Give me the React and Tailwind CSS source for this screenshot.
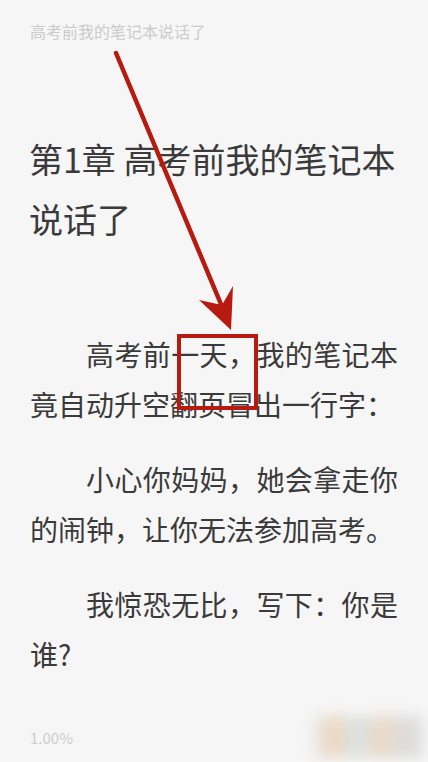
import React from 'react';

const font = { fontFamily: '"Noto Sans CJK SC", "Noto Sans", sans-serif' };

const paragraphs = [
    '高考前一天，我的笔记本竟自动升空翻页冒出一行字：',
    '小心你妈妈，她会拿走你的闹钟，让你无法参加高考。',
    '我惊恐无比，写下：你是谁?',
];

const Annotation = () => (
    <svg className="absolute inset-0 pointer-events-none" width="428" height="762" viewBox="0 0 428 762">
        {/* arrow shaft */}
        <line x1="116" y1="53" x2="223" y2="309" stroke="#b71a10" strokeWidth="4.5" strokeLinecap="round" />
        {/* arrow head */}
        <polygon points="231,330 199,300 222,305 233,286" fill="#b71a10" />
        {/* highlight box */}
        <rect x="179" y="336" width="77" height="72" fill="none" stroke="#b71a10" strokeWidth="4" />
    </svg>
);

// blurred watermark in the corner
const Blur = () => (
    <div className="absolute left-[312px] top-[716px] w-[110px] h-[42px] blur-[7px] flex bg-[#e2e2e2] opacity-80">
        <div className="w-[10px] h-full bg-[#e6e6e6]" />
        <div className="w-[24px] h-full bg-[#e8d3ba]" />
        <div className="w-[24px] h-full bg-[#d6dcda]" />
        <div className="w-[26px] h-full bg-[#e6d4c0]" />
        <div className="flex-1 h-full bg-[#d6d6d6]" />
    </div>
);

export default function App() {
    return (
        <div className="relative w-[428px] h-[762px] overflow-hidden bg-[#f6f6f6] flex flex-col px-[30px]" style={font}>
            <div className="pt-[19px] text-[16px] leading-[24px] text-[#cbcbcb]">高考前我的笔记本说话了</div>

            <h1 className="mt-[86px] text-[34px] leading-[60px] font-normal text-[#3a3a3a] -ml-[1px]">
                第1章 高考前我的笔记本<br />说话了
            </h1>

            <div className="mt-[80px] flex flex-col gap-[25px] text-[28px] leading-[50px] text-[#3a3a3a]">
                {paragraphs.map((p, i) => (
                    <p key={i} className="indent-[56px] text-justify">{p}</p>
                ))}
            </div>

            <div className="mt-auto pb-[14px] text-[15px] leading-[20px] text-[#cccccc]">1.00%</div>

            <Blur />
            <Annotation />
        </div>
    );
}
